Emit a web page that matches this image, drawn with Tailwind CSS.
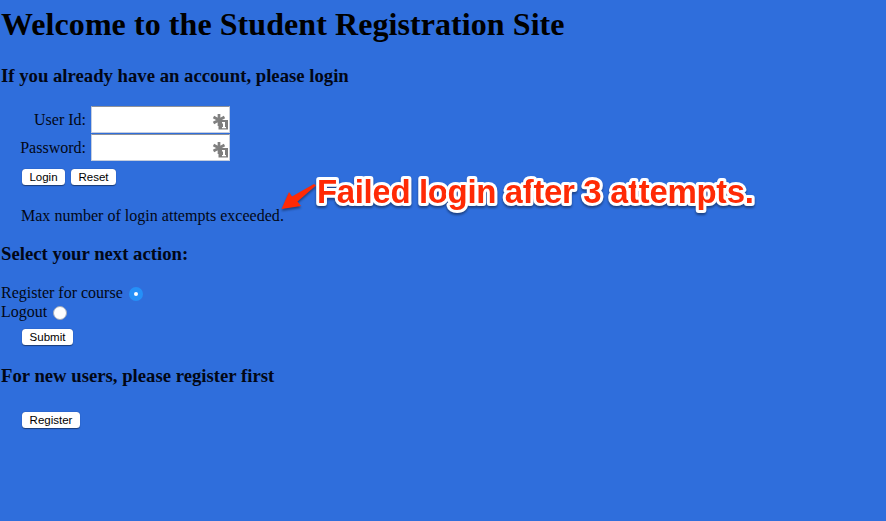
<!DOCTYPE html>
<html lang="en">
<head>
<meta charset="utf-8">
<title>Student Registration Site</title>
<script src="https://cdn.jsdelivr.net/npm/@tailwindcss/browser@4"></script>
</head>
<body class="relative h-[521px] w-[886px] overflow-hidden bg-[#2f6edc] pl-px font-['Liberation_Serif',serif] text-[16px] leading-[20px] text-[#020715]">
<svg class="hidden"><symbol id="key" viewBox="0 0 17 17"><path d="M7 1v12M1.500 4l11 6M12.500 4L1.500 10" stroke="#808080" stroke-width="2.700" fill="none"/><path d="M6.500 7H16v9.500H6.500z" fill="#7d7d7d"/><path d="M10 9h3v5h1v1.200h-4V14h1v-3.600h-1z" fill="#fff"/></symbol></svg>
<h1 class="h-12 text-[32px] leading-[48px] font-bold tracking-[0.07px] whitespace-nowrap text-black">Welcome to the Student Registration Site</h1>
<h3 class="mt-4 h-6 text-[18.72px] leading-6 font-bold">If you already have an account, please login</h3>
<form>
<div class="mt-[18px] flex w-[229px] flex-col gap-px">
<label class="flex h-[27px] items-center justify-end gap-[5px]"><span>User Id:</span><span class="flex h-[27px] w-[139px] items-center justify-end border border-t-[#8e9299] border-x-[#c5cddd] border-b-[#c5cddd] bg-white"><svg class="mt-1 size-[17px]"><use href="#key"/></svg></span></label>
<label class="flex h-[27px] items-center justify-end gap-[5px]"><span>Password:</span><span class="flex h-[27px] w-[139px] items-center justify-end border border-t-[#8e9299] border-x-[#c5cddd] border-b-[#c5cddd] bg-white"><svg class="mt-1 size-[17px]"><use href="#key"/></svg></span></label>
</div>
<div class="mt-2 ml-[21px] flex gap-[6px] font-['Liberation_Sans',sans-serif] text-[11.5px] leading-4 text-black">
<button type="button" class="h-4 w-[43px] rounded-[3.5px] bg-white shadow-[0_0.5px_1px_#0007]">Login</button>
<button type="button" class="h-4 w-[45px] rounded-[3.5px] bg-white shadow-[0_0.5px_1px_#0007]">Reset</button>
</div>
<p class="mt-[21px] ml-5 h-5 tracking-[0.02px]">Max number of login attempts exceeded.</p>
</form>
<h3 class="mt-4 h-6 text-[18.72px] leading-6 font-bold">Select your next action:</h3>
<form>
<div class="mt-[17px] flex h-[19px] items-start"><span>Register for course</span><span class="mt-[4px] ml-[6.5px] flex size-[14px] items-center justify-center rounded-full bg-[#2590f8]"><span class="size-1 rounded-full bg-white"></span></span></div>
<div class="flex h-[19px] items-start"><span>Logout</span><span class="mt-[4px] ml-[6px] size-[14px] rounded-full border border-[#a3abb9] bg-white"></span></div>
<button type="button" class="mt-[8px] ml-[21px] block h-4 w-[51px] rounded-[3.5px] bg-white font-['Liberation_Sans',sans-serif] text-[11.5px] leading-4 text-black shadow-[0_0.5px_1px_#0007]">Submit</button>
</form>
<h3 class="mt-[19px] h-6 text-[18.72px] leading-6 font-bold">For new users, please register first</h3>
<button type="button" class="mt-6 ml-[21px] block h-4 w-[58px] rounded-[3.5px] bg-white font-['Liberation_Sans',sans-serif] text-[11.5px] leading-4 text-black shadow-[0_0.5px_1px_#0007]">Register</button>
<svg class="absolute top-[165px] left-[270px] h-[60px] w-[500px] overflow-visible drop-shadow-[0_2px_1px_#0006]" viewBox="270 165 500 60">
<path d="M281.500 209L289 192L292 196.500L314 184L316 185.500L297.500 201.500L301 206Z" fill="#ff2a05"/>
<text x="317" y="203" textLength="437" font-family="Liberation Sans, sans-serif" font-size="33" font-weight="700" fill="#ff2a05" stroke="#fff" stroke-width="6" stroke-linejoin="round" paint-order="stroke">Failed login after 3 attempts.</text>
</svg>
</body>
</html>
